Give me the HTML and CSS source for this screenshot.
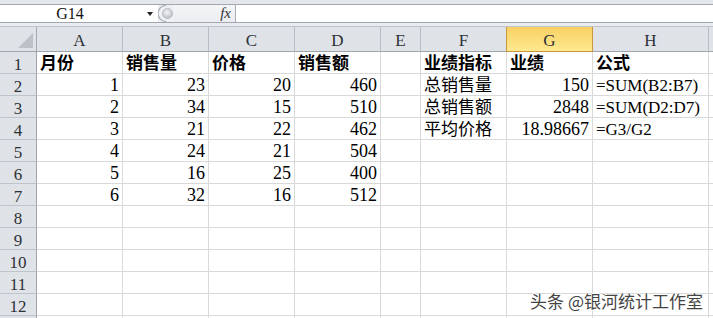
FILE: index.html
```html
<!DOCTYPE html>
<html lang="zh-CN">
<head>
    <meta charset="UTF-8">
    <title>销售统计</title>
    <link rel="stylesheet" href="styles.css">
</head>
<body>
    <div class="fbar-top"></div>
    <div class="fbar">
        <div class="namebox"><span class="name">G14</span><span class="drop"></span></div>
        <div class="grip">
            <svg width="16" height="17" viewBox="0 0 16 17">
                <defs>
                    <radialGradient id="knob" cx="0.45" cy="0.4" r="0.6">
                        <stop offset="0" stop-color="#f4f5f7"/>
                        <stop offset="1" stop-color="#b9bec5"/>
                    </radialGradient>
                </defs>
                <path d="M8 0.5 A8 8 0 0 0 8 16.5" fill="none" stroke="#a9aeb5" stroke-width="1.2"/>
                <circle cx="9.5" cy="8.5" r="5" fill="url(#knob)" stroke="#b0b5bc" stroke-width="0.8"/>
            </svg>
        </div>
        <div class="fx">fx</div>
        <div class="formula"></div>
    </div>
    <div class="fbar-gap"></div>

    <div class="sheet">
        <div class="corner"><svg width="15" height="15" viewBox="0 0 15 15"><polygon points="15,0 15,15 0,15" fill="#bcc1c8"/></svg></div>
        <div class="ch">A</div><div class="ch">B</div><div class="ch">C</div><div class="ch">D</div>
        <div class="ch">E</div><div class="ch">F</div><div class="ch sel">G</div><div class="ch">H</div><div class="ch"></div>

        <div class="rh">1</div>
        <div class="c b">月份</div><div class="c b">销售量</div><div class="c b">价格</div><div class="c b">销售额</div>
        <div class="c"></div><div class="c b">业绩指标</div><div class="c b">业绩</div><div class="c b">公式</div><div class="c"></div>

        <div class="rh">2</div>
        <div class="c num">1</div><div class="c num">23</div><div class="c num">20</div><div class="c num">460</div>
        <div class="c"></div><div class="c">总销售量</div><div class="c num">150</div><div class="c">=SUM(B2:B7)</div><div class="c"></div>

        <div class="rh">3</div>
        <div class="c num">2</div><div class="c num">34</div><div class="c num">15</div><div class="c num">510</div>
        <div class="c"></div><div class="c">总销售额</div><div class="c num">2848</div><div class="c">=SUM(D2:D7)</div><div class="c"></div>

        <div class="rh">4</div>
        <div class="c num">3</div><div class="c num">21</div><div class="c num">22</div><div class="c num">462</div>
        <div class="c"></div><div class="c">平均价格</div><div class="c num">18.98667</div><div class="c">=G3/G2</div><div class="c"></div>

        <div class="rh">5</div>
        <div class="c num">4</div><div class="c num">24</div><div class="c num">21</div><div class="c num">504</div>
        <div class="c"></div><div class="c"></div><div class="c"></div><div class="c"></div><div class="c"></div>

        <div class="rh">6</div>
        <div class="c num">5</div><div class="c num">16</div><div class="c num">25</div><div class="c num">400</div>
        <div class="c"></div><div class="c"></div><div class="c"></div><div class="c"></div><div class="c"></div>

        <div class="rh">7</div>
        <div class="c num">6</div><div class="c num">32</div><div class="c num">16</div><div class="c num">512</div>
        <div class="c"></div><div class="c"></div><div class="c"></div><div class="c"></div><div class="c"></div>

        <div class="rh">8</div>
        <div class="c"></div><div class="c"></div><div class="c"></div><div class="c"></div>
        <div class="c"></div><div class="c"></div><div class="c"></div><div class="c"></div><div class="c"></div>

        <div class="rh">9</div>
        <div class="c"></div><div class="c"></div><div class="c"></div><div class="c"></div>
        <div class="c"></div><div class="c"></div><div class="c"></div><div class="c"></div><div class="c"></div>

        <div class="rh">10</div>
        <div class="c"></div><div class="c"></div><div class="c"></div><div class="c"></div>
        <div class="c"></div><div class="c"></div><div class="c"></div><div class="c"></div><div class="c"></div>

        <div class="rh">11</div>
        <div class="c"></div><div class="c"></div><div class="c"></div><div class="c"></div>
        <div class="c"></div><div class="c"></div><div class="c"></div><div class="c"></div><div class="c"></div>

        <div class="rh">12</div>
        <div class="c"></div><div class="c"></div><div class="c"></div><div class="c"></div>
        <div class="c"></div><div class="c"></div><div class="c"></div><div class="c"></div><div class="c"></div>

        <!-- row 13, only its top edge is in view -->
        <div class="rh"></div>
        <div class="c"></div><div class="c"></div><div class="c"></div><div class="c"></div>
        <div class="c"></div><div class="c"></div><div class="c"></div><div class="c"></div><div class="c"></div>
    </div>

    <div class="watermark">头条 @银河统计工作室</div>
</body>
</html>
```

FILE: styles.css
```css
body {
    margin: 0;
    width: 713px;
    height: 318px;
    overflow: hidden;
    position: relative;
    background: #fff;
    font-family: "Liberation Serif", "Noto Sans CJK SC", serif;
}

/* formula bar */
.fbar-top {
    height: 4px;
    background: #e3e6eb;
    border-bottom: 1px solid #a3a8af;
}
.fbar {
    display: flex;
    height: 17px;
    background: #fff;
    border-bottom: 1px solid #a2a7ae;
}
.namebox {
    width: 158px;
    display: flex;
    align-items: center;
}
.name {
    width: 140px;
    text-align: center;
    font-size: 16px;
    line-height: 17px;
    color: #111;
}
.drop {
    width: 0;
    height: 0;
    margin-left: 7px;
    border-left: 3.5px solid transparent;
    border-right: 3.5px solid transparent;
    border-top: 4px solid #222;
}
.grip {
    width: 16px;
    background: #eef0f3;
}
.grip svg { display: block; }
.fx {
    width: 62px;
    background: linear-gradient(#f4f5f7, #eaedf1);
    border-right: 1px solid #a9aeb5;
    text-align: right;
    padding-right: 4px;
    box-sizing: border-box;
    font-style: italic;
    font-size: 15px;
    line-height: 17px;
    color: #333;
}
.formula { flex: 1; }
.fbar-gap {
    height: 3px;
    background: #e8ebef;
    border-bottom: 1px solid #bfc3c9;
}

/* sheet grid */
.sheet {
    display: grid;
    grid-template-columns: 37px 86px 86px 86px 86px 40px 86px 86px 116px 1fr;
    grid-template-rows: 25px repeat(12, 22px) 3px;
    font-size: 17px;
}
.sheet > div {
    box-sizing: border-box;
    white-space: nowrap;
}
.corner, .ch, .rh {
    background: #dfe3e8;
    color: #2e3136;
}
.corner {
    border-right: 1px solid #a4aab2;
    border-bottom: 1px solid #9fa5ad;
    display: flex;
    justify-content: flex-end;
    align-items: flex-end;
    padding: 0 3px 3px 0;
}
.corner svg { display: block; }
.ch {
    text-align: center;
    line-height: 28px;
    border-right: 1px solid #b9bec5;
    border-bottom: 1px solid #9fa5ad;
}
.ch.sel {
    background: linear-gradient(#f8d064, #ffe98f);
    border: 1px solid #c8963e;
    border-top: none;
    margin-left: -1px;
}
.rh {
    text-align: center;
    line-height: 26px;
    border-right: 1px solid #9fa5ad;
    border-bottom: 1px solid #bfc4cb;
}
.c {
    line-height: 24px;
    padding: 0 3px;
    border-right: 1px solid #d9d9d9;
    border-bottom: 1px solid #d9d9d9;
    color: #000;
}
.num {
    text-align: right;
    font-size: 18px;
    line-height: 23px;
}
.b { font-weight: bold; }

.watermark {
    position: absolute;
    right: 10px;
    bottom: 7px;
    font-family: "Noto Sans CJK SC", sans-serif;
    font-size: 17px;
    line-height: 20px;
    color: #444;
    text-shadow: 1px 0 #fff, -1px 0 #fff, 0 1px #fff, 0 -1px #fff;
}
```
